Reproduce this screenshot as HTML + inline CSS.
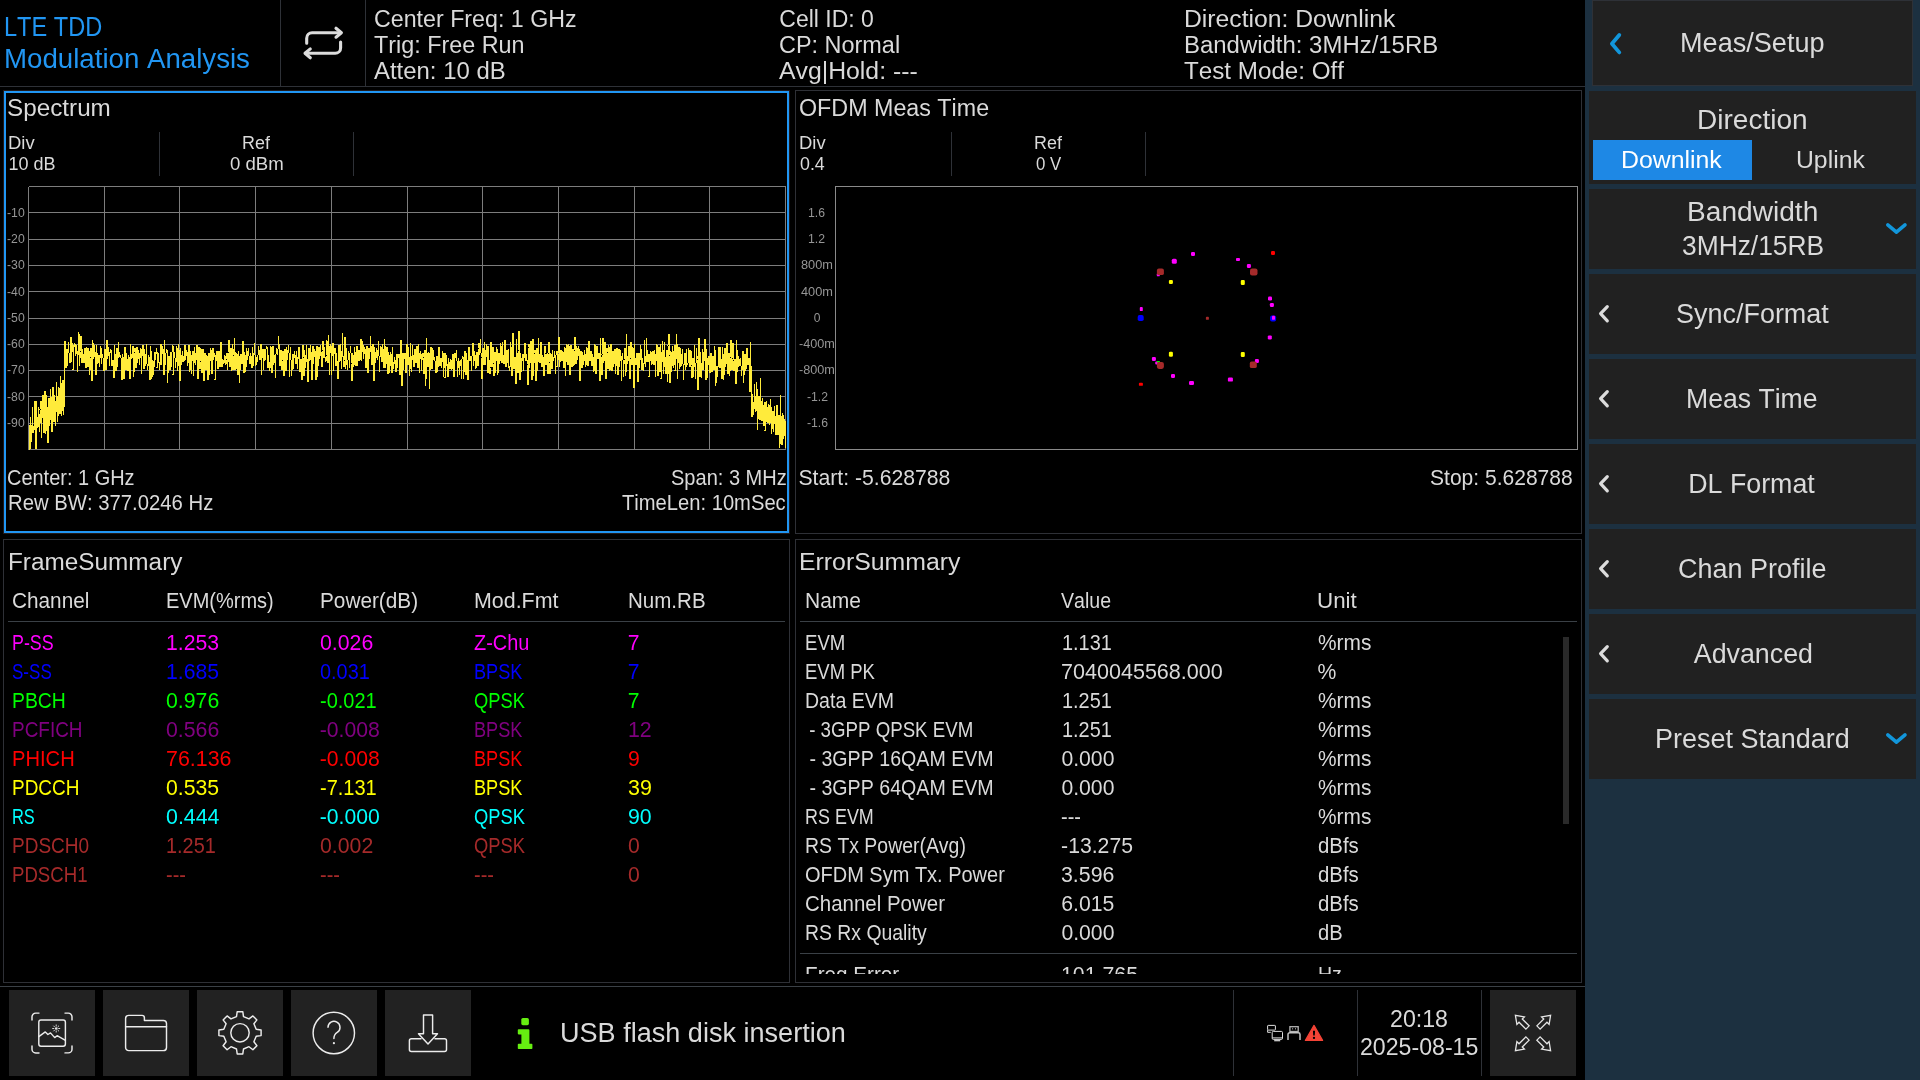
<!DOCTYPE html><html lang="en"><head><meta charset="utf-8"><title>LTE TDD Modulation Analysis</title><style>
*{box-sizing:border-box;margin:0;padding:0}
html,body{width:1920px;height:1080px;overflow:hidden;background:#000}
#app{position:absolute;left:0;top:0;width:1920px;height:1080px;will-change:transform}
body{position:relative;font-family:"Liberation Sans",sans-serif;color:#dadada}
.t{position:absolute;white-space:pre;line-height:1;font-kerning:none;transform-origin:0 50%}
.abs,section,header,footer,aside,nav,button,svg{position:absolute}
section.panel{border:1px solid #2e3036;background:#000}
section.panel.sel{border:1px solid #221b1b;box-shadow:inset 0 0 0 2px #2196f3}
.vsep{position:absolute;width:1px;background:#2e3137}
.hsep{position:absolute;height:1px;background:#3a4046}
button{border:0;background:#222;display:block}
button svg{left:0;top:0}
aside{left:1585px;top:0;width:335px;height:1080px;background:#1c3040}
aside .item{position:absolute;left:4px;width:327px;height:80px;background:#212121}
svg{overflow:visible}
</style></head><body><main id="app">
<header style="left:0;top:0;width:1585px;height:87px">
<div class="hsep" style="left:0;top:86px;width:1585px;background:#2e3137"></div>
<div class="vsep" style="left:280px;top:0;height:86px"></div><div class="vsep" style="left:365px;top:0;height:86px"></div>
<svg style="left:300px;top:22px" width="48" height="42" viewBox="300 22 48 42"><g fill="none" stroke="#dcdcdc" stroke-width="3.1" stroke-linecap="round" stroke-linejoin="round"><path d="M306.7 43.3V38.2a5.4 5.4 0 0 1 5.4-5.4H340.5"/><path d="M336 28.2L341.4 32.8L336 37.2"/><path d="M340.6 42V47.9a5.4 5.4 0 0 1-5.4 5.4H306"/><path d="M310.3 48.9L305 53.3L310.3 57.8"/></g></svg>
<span class="t" style="left:4.1px;top:12px;font-size:26.8px;line-height:30px;transform:scaleX(0.880);color:#2196f3">LTE TDD</span>
<span class="t" style="left:3.6px;top:44px;font-size:26.8px;line-height:30px;transform:scaleX(1.032);color:#2196f3">Modulation Analysis</span>
<span class="t" style="left:374.3px;top:6px;font-size:23px;line-height:26px;transform:scaleX(1.010)">Center Freq: 1 GHz</span>
<span class="t" style="left:373.7px;top:32px;font-size:23px;line-height:26px;transform:scaleX(1.015)">Trig: Free Run</span>
<span class="t" style="left:374.0px;top:58px;font-size:23px;line-height:26px;transform:scaleX(1.040)">Atten: 10 dB</span>
<span class="t" style="left:779.3px;top:6px;font-size:23px;line-height:26px">Cell ID: 0</span>
<span class="t" style="left:779.3px;top:32px;font-size:23px;line-height:26px;transform:scaleX(1.019)">CP: Normal</span>
<span class="t" style="left:779.0px;top:58px;font-size:23px;line-height:26px;transform:scaleX(1.078)">Avg|Hold: ---</span>
<span class="t" style="left:1184.3px;top:6px;font-size:23px;line-height:26px;transform:scaleX(1.074)">Direction: Downlink</span>
<span class="t" style="left:1184.4px;top:32px;font-size:23px;line-height:26px;transform:scaleX(1.041)">Bandwidth: 3MHz/15RB</span>
<span class="t" style="left:1183.7px;top:58px;font-size:23px;line-height:26px;transform:scaleX(1.052)">Test Mode: Off</span>
</header>
<section class="panel sel" style="left:3px;top:90px;width:787px;height:444px">
<div class="vsep" style="left:155px;top:41px;height:44px"></div><div class="vsep" style="left:349px;top:41px;height:44px"></div>
<svg style="left:24px;top:95px" width="760" height="265" viewBox="-0.5 -0.5 760 265"><g stroke="#7d7d7d" stroke-width="1" shape-rendering="crispEdges"><line x1="0" y1="0" x2="0" y2="263"/><line x1="76" y1="0" x2="76" y2="263"/><line x1="151" y1="0" x2="151" y2="263"/><line x1="227" y1="0" x2="227" y2="263"/><line x1="303" y1="0" x2="303" y2="263"/><line x1="379" y1="0" x2="379" y2="263"/><line x1="454" y1="0" x2="454" y2="263"/><line x1="530" y1="0" x2="530" y2="263"/><line x1="606" y1="0" x2="606" y2="263"/><line x1="681" y1="0" x2="681" y2="263"/><line x1="757" y1="0" x2="757" y2="263"/><line x1="0" y1="0" x2="757" y2="0"/><line x1="0" y1="26" x2="757" y2="26"/><line x1="0" y1="53" x2="757" y2="53"/><line x1="0" y1="79" x2="757" y2="79"/><line x1="0" y1="105" x2="757" y2="105"/><line x1="0" y1="132" x2="757" y2="132"/><line x1="0" y1="158" x2="757" y2="158"/><line x1="0" y1="184" x2="757" y2="184"/><line x1="0" y1="210" x2="757" y2="210"/><line x1="0" y1="237" x2="757" y2="237"/><line x1="0" y1="263" x2="757" y2="263"/></g><polyline fill="none" stroke="#ffeb3b" stroke-width="1" stroke-linejoin="bevel" shape-rendering="crispEdges" points="0.5,238.4 0.5,262.5 1.5,262.5 1.5,230.5 2.5,239.0 2.5,255.6 3.5,246.0 3.5,220.1 4.5,239.3 4.5,246.8 5.5,243.3 5.5,219.6 6.5,214.1 6.5,253.4 7.5,262.0 7.5,214.9 8.5,230.1 8.5,241.9 9.5,240.0 9.5,220.6 10.5,227.3 10.5,245.0 11.5,236.8 11.5,223.1 12.5,215.0 12.5,251.8 13.5,231.3 13.5,208.9 14.5,208.8 14.5,240.6 15.5,246.4 15.5,216.4 16.5,204.8 16.5,247.2 17.5,244.4 17.5,208.1 18.5,220.5 18.5,234.5 19.5,256.5 19.5,222.5 20.5,211.8 20.5,239.6 21.5,233.5 21.5,202.2 22.5,210.6 22.5,226.5 23.5,245.2 23.5,212.6 24.5,200.4 24.5,223.0 25.5,235.0 25.5,208.0 26.5,214.6 26.5,239.2 27.5,225.9 27.5,195.9 28.5,209.0 28.5,235.4 29.5,229.9 29.5,201.2 30.5,201.8 30.5,223.8 31.5,227.8 31.5,189.4 32.5,196.6 32.5,229.4 33.5,224.8 33.5,198.7 34.5,193.9 34.5,228.1 35.5,220.6 35.5,183.6 36.5,154.6 36.5,172.8 37.5,181.9 37.5,165.2 38.5,162.7 38.5,179.3 39.5,166.4 39.5,155.8 40.5,166.2 40.5,174.2 41.5,176.6 41.5,162.8 42.5,150.8 42.5,175.5 43.5,165.2 43.5,156.9 44.5,158.7 44.5,183.1 45.5,160.8 45.5,159.2 46.5,157.0 46.5,169.9 47.5,167.2 47.5,158.9 48.5,164.9 48.5,185.6 49.5,168.9 49.5,145.8 50.5,147.3 50.5,179.3 51.5,171.9 51.5,165.3 52.5,149.6 52.5,170.7 53.5,176.0 53.5,162.9 54.5,167.5 54.5,176.1 55.5,176.5 55.5,165.7 56.5,161.7 56.5,173.5 57.5,181.2 57.5,174.5 58.5,161.0 58.5,172.6 59.5,180.6 59.5,161.4 60.5,164.3 60.5,188.9 61.5,183.1 61.5,171.1 62.5,161.9 62.5,183.6 63.5,194.8 63.5,153.7 64.5,156.3 64.5,172.4 65.5,170.6 65.5,158.8 66.5,165.9 66.5,170.7 67.5,188.4 67.5,158.5 68.5,166.3 68.5,176.1 69.5,176.9 69.5,173.6 70.5,168.3 70.5,180.3 71.5,171.9 71.5,159.4 72.5,161.3 72.5,177.2 73.5,171.9 73.5,167.8 74.5,171.7 74.5,178.1 75.5,184.7 75.5,164.5 76.5,162.9 76.5,179.7 77.5,183.5 77.5,170.6 78.5,153.7 78.5,172.8 79.5,169.4 79.5,160.8 80.5,165.5 80.5,179.5 81.5,166.3 81.5,163.4 82.5,163.3 82.5,171.4 83.5,179.8 83.5,174.2 84.5,174.0 84.5,177.2 85.5,191.9 85.5,158.2 86.5,167.3 86.5,178.2 87.5,184.6 87.5,165.5 88.5,161.3 88.5,180.5 89.5,171.4 89.5,155.9 90.5,165.3 90.5,168.8 91.5,170.1 91.5,168.6 92.5,171.5 92.5,181.0 93.5,193.3 93.5,167.6 94.5,170.3 94.5,184.0 95.5,192.8 95.5,168.7 96.5,160.1 96.5,169.1 97.5,183.0 97.5,167.0 98.5,172.3 98.5,174.6 99.5,184.1 99.5,169.0 100.5,170.9 100.5,185.3 101.5,192.0 101.5,157.7 102.5,167.3 102.5,172.4 103.5,171.2 103.5,168.9 104.5,159.8 104.5,190.3 105.5,185.8 105.5,166.0 106.5,161.1 106.5,170.6 107.5,181.9 107.5,169.7 108.5,160.5 108.5,176.4 109.5,172.0 109.5,163.2 110.5,166.1 110.5,178.4 111.5,171.3 111.5,162.3 112.5,162.7 112.5,187.9 113.5,169.9 113.5,160.3 114.5,158.6 114.5,167.3 115.5,182.0 115.5,162.4 116.5,167.2 116.5,179.9 117.5,173.5 117.5,157.5 118.5,177.3 118.5,183.9 119.5,179.7 119.5,168.5 120.5,170.6 120.5,187.0 121.5,193.1 121.5,159.3 122.5,164.7 122.5,192.2 123.5,190.1 123.5,173.4 124.5,174.7 124.5,188.6 125.5,180.5 125.5,168.7 126.5,165.4 126.5,173.7 127.5,167.2 127.5,161.6 128.5,165.6 128.5,181.1 129.5,175.6 129.5,166.1 130.5,176.0 130.5,183.3 131.5,178.8 131.5,162.7 132.5,157.3 132.5,178.8 133.5,167.8 133.5,159.1 134.5,162.1 134.5,172.3 135.5,188.9 135.5,153.7 136.5,167.9 136.5,178.4 137.5,166.8 137.5,164.0 138.5,163.1 138.5,196.1 139.5,186.5 139.5,169.9 140.5,169.7 140.5,179.9 141.5,183.3 141.5,166.4 142.5,165.4 142.5,180.5 143.5,165.8 143.5,159.4 144.5,159.1 144.5,188.2 145.5,171.7 145.5,165.0 146.5,171.1 146.5,181.3 147.5,175.1 147.5,159.7 148.5,161.9 148.5,184.3 149.5,179.2 149.5,158.0 150.5,163.2 150.5,190.6 151.5,194.5 151.5,161.5 152.5,168.2 152.5,178.1 153.5,175.6 153.5,164.5 154.5,169.9 154.5,175.6 155.5,174.5 155.5,169.6 156.5,158.7 156.5,173.1 157.5,169.5 157.5,164.0 158.5,165.2 158.5,179.2 159.5,176.9 159.5,161.8 160.5,158.7 160.5,185.3 161.5,183.1 161.5,164.5 162.5,168.5 162.5,187.3 163.5,174.9 163.5,165.5 164.5,164.7 164.5,189.3 165.5,176.9 165.5,161.0 166.5,166.3 166.5,178.4 167.5,173.0 167.5,166.2 168.5,158.1 168.5,177.5 169.5,192.0 169.5,166.3 170.5,160.7 170.5,174.2 171.5,182.9 171.5,175.2 172.5,162.0 172.5,178.0 173.5,186.6 173.5,168.2 174.5,162.8 174.5,172.6 175.5,194.0 175.5,174.9 176.5,166.8 176.5,171.6 177.5,183.2 177.5,169.1 178.5,169.2 178.5,188.0 179.5,193.6 179.5,175.8 180.5,166.4 180.5,188.1 181.5,174.2 181.5,162.2 182.5,163.2 182.5,185.8 183.5,187.0 183.5,165.5 184.5,161.7 184.5,173.6 185.5,170.4 185.5,166.9 186.5,168.7 186.5,193.3 187.5,174.0 187.5,169.3 188.5,164.7 188.5,176.4 189.5,182.9 189.5,166.4 190.5,164.7 190.5,174.4 191.5,180.9 191.5,160.2 192.5,155.5 192.5,166.5 193.5,180.1 193.5,172.7 194.5,173.0 194.5,176.6 195.5,176.8 195.5,169.4 196.5,169.3 196.5,178.8 197.5,177.1 197.5,173.0 198.5,166.6 198.5,183.9 199.5,175.8 199.5,166.0 200.5,153.5 200.5,164.1 201.5,180.5 201.5,171.6 202.5,161.1 202.5,184.9 203.5,183.1 203.5,158.0 204.5,162.3 204.5,168.8 205.5,183.9 205.5,151.5 206.5,165.1 206.5,182.5 207.5,182.8 207.5,171.9 208.5,167.0 208.5,185.1 209.5,188.9 209.5,164.2 210.5,169.4 210.5,196.3 211.5,183.8 211.5,178.9 212.5,167.9 212.5,173.5 213.5,177.8 213.5,158.7 214.5,154.9 214.5,179.3 215.5,186.6 215.5,165.5 216.5,168.1 216.5,185.6 217.5,180.7 217.5,161.2 218.5,165.0 218.5,173.6 219.5,164.2 219.5,161.2 220.5,169.1 220.5,170.2 221.5,177.5 221.5,166.5 222.5,169.1 222.5,169.5 223.5,181.1 223.5,160.7 224.5,166.1 224.5,179.3 225.5,167.6 225.5,156.2 226.5,168.5 226.5,179.8 227.5,178.1 227.5,170.2 228.5,171.6 228.5,175.0 229.5,168.2 229.5,159.4 230.5,163.9 230.5,166.2 231.5,173.4 231.5,165.3 232.5,157.3 232.5,188.9 233.5,171.5 233.5,163.9 234.5,162.3 234.5,183.6 235.5,174.5 235.5,166.4 236.5,163.0 236.5,173.1 237.5,162.4 237.5,159.9 238.5,160.5 238.5,164.6 239.5,181.0 239.5,168.1 240.5,175.8 240.5,184.0 241.5,181.9 241.5,160.3 242.5,160.5 242.5,185.1 243.5,186.1 243.5,163.1 244.5,159.6 244.5,178.0 245.5,176.4 245.5,168.4 246.5,170.7 246.5,191.6 247.5,167.8 247.5,161.4 248.5,165.2 248.5,168.8 249.5,162.6 249.5,149.9 250.5,157.7 250.5,169.0 251.5,179.5 251.5,165.2 252.5,163.2 252.5,181.9 253.5,183.5 253.5,174.0 254.5,164.9 254.5,169.3 255.5,189.5 255.5,167.9 256.5,162.4 256.5,175.0 257.5,184.6 257.5,160.6 258.5,165.6 258.5,173.9 259.5,163.8 259.5,158.6 260.5,166.4 260.5,190.8 261.5,168.4 261.5,160.4 262.5,173.4 262.5,189.5 263.5,183.9 263.5,168.8 264.5,167.5 264.5,182.7 265.5,171.6 265.5,164.8 266.5,168.1 266.5,172.8 267.5,177.2 267.5,164.1 268.5,170.2 268.5,182.8 269.5,172.8 269.5,169.2 270.5,160.4 270.5,181.7 271.5,185.4 271.5,174.4 272.5,172.8 272.5,182.5 273.5,193.4 273.5,166.8 274.5,158.9 274.5,170.8 275.5,189.3 275.5,163.5 276.5,168.8 276.5,181.6 277.5,175.6 277.5,158.0 278.5,172.9 278.5,184.4 279.5,195.6 279.5,176.9 280.5,161.7 280.5,174.7 281.5,173.2 281.5,158.4 282.5,165.8 282.5,178.4 283.5,193.1 283.5,167.5 284.5,159.1 284.5,177.2 285.5,170.6 285.5,162.9 286.5,164.6 286.5,175.5 287.5,193.6 287.5,172.6 288.5,159.5 288.5,190.4 289.5,179.8 289.5,164.9 290.5,160.8 290.5,172.6 291.5,169.2 291.5,158.3 292.5,165.0 292.5,179.4 293.5,180.4 293.5,164.0 294.5,154.2 294.5,164.9 295.5,171.6 295.5,160.4 296.5,170.2 296.5,174.2 297.5,174.7 297.5,169.4 298.5,154.0 298.5,175.2 299.5,176.6 299.5,148.0 300.5,159.1 300.5,188.2 301.5,166.7 301.5,157.4 302.5,159.3 302.5,188.8 303.5,169.4 303.5,158.6 304.5,156.5 304.5,184.0 305.5,167.6 305.5,164.7 306.5,161.6 306.5,171.2 307.5,179.7 307.5,166.2 308.5,174.4 308.5,177.6 309.5,192.1 309.5,165.3 310.5,158.8 310.5,174.3 311.5,174.8 311.5,157.0 312.5,166.9 312.5,182.2 313.5,164.2 313.5,146.1 314.5,170.0 314.5,175.1 315.5,180.7 315.5,174.0 316.5,150.3 316.5,182.2 317.5,174.4 317.5,161.1 318.5,178.8 318.5,183.0 319.5,173.6 319.5,165.0 320.5,166.1 320.5,181.6 321.5,166.6 321.5,159.1 322.5,166.7 322.5,176.9 323.5,194.2 323.5,166.9 324.5,168.3 324.5,180.1 325.5,178.9 325.5,160.1 326.5,165.2 326.5,176.3 327.5,179.4 327.5,168.8 328.5,159.7 328.5,179.7 329.5,174.5 329.5,166.4 330.5,163.2 330.5,173.6 331.5,173.7 331.5,170.8 332.5,153.0 332.5,174.5 333.5,165.8 333.5,155.0 334.5,158.2 334.5,172.1 335.5,167.6 335.5,160.4 336.5,162.0 336.5,170.7 337.5,181.4 337.5,166.5 338.5,159.4 338.5,180.6 339.5,186.1 339.5,175.6 340.5,161.2 340.5,172.3 341.5,165.5 341.5,149.4 342.5,159.5 342.5,174.3 343.5,178.5 343.5,161.8 344.5,158.0 344.5,166.0 345.5,194.6 345.5,160.6 346.5,165.5 346.5,176.8 347.5,171.5 347.5,161.4 348.5,163.1 348.5,173.5 349.5,168.9 349.5,154.0 350.5,169.3 350.5,185.3 351.5,170.3 351.5,159.7 352.5,160.3 352.5,172.3 353.5,175.8 353.5,157.9 354.5,162.4 354.5,177.3 355.5,181.3 355.5,152.7 356.5,159.3 356.5,181.2 357.5,177.9 357.5,167.9 358.5,160.8 358.5,173.7 359.5,187.2 359.5,166.1 360.5,168.0 360.5,186.7 361.5,179.4 361.5,165.3 362.5,167.1 362.5,177.4 363.5,186.9 363.5,160.2 364.5,175.7 364.5,182.8 365.5,177.9 365.5,171.0 366.5,173.7 366.5,185.2 367.5,185.5 367.5,176.5 368.5,167.1 368.5,181.7 369.5,171.6 369.5,168.8 370.5,167.2 370.5,175.3 371.5,188.0 371.5,159.2 372.5,153.4 372.5,185.2 373.5,199.0 373.5,171.9 374.5,166.6 374.5,183.7 375.5,172.8 375.5,166.6 376.5,166.8 376.5,180.5 377.5,186.2 377.5,165.3 378.5,157.2 378.5,174.7 379.5,178.7 379.5,160.8 380.5,170.3 380.5,189.2 381.5,182.7 381.5,156.8 382.5,169.8 382.5,185.2 383.5,173.8 383.5,158.9 384.5,169.0 384.5,177.5 385.5,180.1 385.5,164.4 386.5,162.5 386.5,170.7 387.5,176.4 387.5,166.6 388.5,159.5 388.5,164.1 389.5,181.1 389.5,157.4 390.5,166.3 390.5,186.0 391.5,172.3 391.5,164.2 392.5,167.5 392.5,184.3 393.5,173.1 393.5,167.5 394.5,166.6 394.5,170.9 395.5,187.4 395.5,166.9 396.5,163.8 396.5,199.9 397.5,192.8 397.5,151.3 398.5,166.2 398.5,176.6 399.5,180.8 399.5,167.3 400.5,166.2 400.5,202.9 401.5,183.5 401.5,163.0 402.5,160.7 402.5,180.7 403.5,182.8 403.5,161.4 404.5,163.2 404.5,168.7 405.5,173.9 405.5,170.7 406.5,174.1 406.5,181.2 407.5,186.3 407.5,172.1 408.5,169.2 408.5,185.9 409.5,180.9 409.5,168.6 410.5,160.6 410.5,174.8 411.5,179.7 411.5,173.9 412.5,171.8 412.5,181.0 413.5,175.0 413.5,165.0 414.5,166.2 414.5,190.4 415.5,181.1 415.5,175.9 416.5,166.3 416.5,191.1 417.5,179.5 417.5,168.0 418.5,177.3 418.5,186.3 419.5,190.8 419.5,171.4 420.5,175.4 420.5,179.7 421.5,182.4 421.5,172.7 422.5,173.1 422.5,183.0 423.5,182.4 423.5,177.2 424.5,167.4 424.5,172.6 425.5,190.7 425.5,168.9 426.5,166.8 426.5,171.6 427.5,170.6 427.5,163.3 428.5,174.4 428.5,190.7 429.5,181.6 429.5,171.1 430.5,174.7 430.5,188.2 431.5,179.4 431.5,174.2 432.5,173.9 432.5,192.0 433.5,172.5 433.5,171.0 434.5,170.2 434.5,192.4 435.5,185.5 435.5,183.8 436.5,164.7 436.5,182.4 437.5,188.3 437.5,166.6 438.5,173.6 438.5,180.8 439.5,193.1 439.5,170.9 440.5,160.3 440.5,173.2 441.5,174.4 441.5,170.3 442.5,170.5 442.5,184.0 443.5,169.5 443.5,159.9 444.5,156.9 444.5,179.3 445.5,174.0 445.5,164.5 446.5,168.6 446.5,180.7 447.5,181.9 447.5,168.9 448.5,165.1 448.5,176.1 449.5,179.1 449.5,162.0 450.5,156.9 450.5,168.6 451.5,163.3 451.5,152.8 452.5,166.2 452.5,170.9 453.5,192.2 453.5,167.4 454.5,161.8 454.5,177.6 455.5,178.4 455.5,155.8 456.5,163.0 456.5,178.3 457.5,170.0 457.5,157.5 458.5,159.1 458.5,168.1 459.5,186.1 459.5,159.6 460.5,173.2 460.5,179.2 461.5,187.8 461.5,181.4 462.5,155.2 462.5,161.2 463.5,180.3 463.5,171.8 464.5,160.6 464.5,176.9 465.5,189.8 465.5,169.6 466.5,165.4 466.5,186.5 467.5,174.6 467.5,160.9 468.5,162.2 468.5,188.7 469.5,186.6 469.5,167.7 470.5,166.2 470.5,177.3 471.5,174.9 471.5,156.5 472.5,159.9 472.5,169.0 473.5,176.3 473.5,155.1 474.5,168.5 474.5,177.3 475.5,177.0 475.5,161.9 476.5,153.4 476.5,179.9 477.5,180.5 477.5,168.9 478.5,163.8 478.5,167.2 479.5,176.6 479.5,162.5 480.5,181.2 480.5,184.6 481.5,180.1 481.5,155.1 482.5,160.7 482.5,183.8 483.5,189.2 483.5,158.4 484.5,146.4 484.5,174.3 485.5,182.9 485.5,173.8 486.5,170.6 486.5,184.7 487.5,197.5 487.5,152.9 488.5,166.6 488.5,178.2 489.5,186.0 489.5,164.0 490.5,145.0 490.5,180.5 491.5,193.3 491.5,166.2 492.5,171.0 492.5,185.4 493.5,174.8 493.5,168.1 494.5,167.3 494.5,184.4 495.5,171.8 495.5,166.6 496.5,156.9 496.5,170.1 497.5,174.2 497.5,167.4 498.5,173.3 498.5,177.9 499.5,198.2 499.5,161.0 500.5,157.2 500.5,181.8 501.5,176.4 501.5,162.5 502.5,154.4 502.5,173.7 503.5,193.6 503.5,170.4 504.5,152.8 504.5,189.9 505.5,176.0 505.5,167.0 506.5,163.4 506.5,178.6 507.5,194.0 507.5,180.8 508.5,161.9 508.5,184.4 509.5,175.4 509.5,151.6 510.5,167.4 510.5,171.5 511.5,176.4 511.5,170.3 512.5,155.3 512.5,180.6 513.5,180.2 513.5,168.9 514.5,170.8 514.5,185.8 515.5,189.4 515.5,179.5 516.5,159.7 516.5,166.9 517.5,178.7 517.5,167.9 518.5,167.8 518.5,174.2 519.5,187.5 519.5,167.1 520.5,155.2 520.5,175.9 521.5,187.5 521.5,178.4 522.5,167.0 522.5,170.5 523.5,182.6 523.5,163.3 524.5,170.0 524.5,174.7 525.5,171.3 525.5,164.0 526.5,170.9 526.5,187.7 527.5,168.7 527.5,167.7 528.5,164.8 528.5,180.1 529.5,173.0 529.5,167.4 530.5,150.9 530.5,180.8 531.5,175.5 531.5,171.4 532.5,163.2 532.5,165.0 533.5,174.0 533.5,165.0 534.5,165.8 534.5,173.7 535.5,181.3 535.5,164.2 536.5,161.0 536.5,189.1 537.5,175.2 537.5,163.5 538.5,158.0 538.5,177.6 539.5,178.5 539.5,157.6 540.5,159.2 540.5,174.0 541.5,188.4 541.5,167.5 542.5,158.4 542.5,174.3 543.5,180.4 543.5,167.3 544.5,162.3 544.5,179.3 545.5,178.0 545.5,164.2 546.5,150.9 546.5,168.7 547.5,177.7 547.5,159.5 548.5,161.5 548.5,173.2 549.5,169.8 549.5,159.8 550.5,162.8 550.5,172.6 551.5,194.4 551.5,166.2 552.5,164.3 552.5,167.5 553.5,181.0 553.5,165.1 554.5,168.7 554.5,178.8 555.5,174.1 555.5,163.7 556.5,167.9 556.5,180.7 557.5,178.9 557.5,161.8 558.5,161.3 558.5,174.2 559.5,179.1 559.5,174.8 560.5,155.0 560.5,170.1 561.5,174.3 561.5,167.7 562.5,164.7 562.5,175.7 563.5,179.7 563.5,167.8 564.5,170.5 564.5,182.9 565.5,184.9 565.5,158.1 566.5,158.3 566.5,169.5 567.5,187.0 567.5,163.5 568.5,159.7 568.5,168.5 569.5,172.7 569.5,166.8 570.5,166.9 570.5,177.7 571.5,194.2 571.5,151.7 572.5,170.1 572.5,182.6 573.5,188.8 573.5,168.2 574.5,152.0 574.5,176.2 575.5,174.5 575.5,156.3 576.5,155.9 576.5,166.9 577.5,192.7 577.5,167.1 578.5,161.8 578.5,165.9 579.5,182.6 579.5,158.9 580.5,160.8 580.5,180.4 581.5,183.9 581.5,164.7 582.5,157.4 582.5,172.5 583.5,184.4 583.5,181.5 584.5,164.9 584.5,180.6 585.5,177.0 585.5,165.8 586.5,162.7 586.5,187.4 587.5,179.2 587.5,164.2 588.5,161.8 588.5,173.2 589.5,188.2 589.5,172.6 590.5,162.4 590.5,180.9 591.5,174.0 591.5,163.5 592.5,169.4 592.5,194.8 593.5,171.5 593.5,166.3 594.5,173.0 594.5,190.7 595.5,177.2 595.5,173.0 596.5,161.4 596.5,189.7 597.5,185.7 597.5,147.1 598.5,169.5 598.5,177.9 599.5,174.6 599.5,167.4 600.5,159.8 600.5,162.3 601.5,192.7 601.5,172.0 602.5,155.6 602.5,173.9 603.5,178.3 603.5,163.6 604.5,161.0 604.5,188.6 605.5,201.7 605.5,157.3 606.5,171.6 606.5,176.4 607.5,178.7 607.5,170.3 608.5,166.5 608.5,181.7 609.5,195.6 609.5,171.0 610.5,166.8 610.5,181.3 611.5,173.0 611.5,159.0 612.5,162.3 612.5,178.2 613.5,183.8 613.5,171.4 614.5,176.7 614.5,184.9 615.5,177.9 615.5,153.6 616.5,170.0 616.5,180.2 617.5,175.8 617.5,151.7 618.5,163.3 618.5,168.4 619.5,175.0 619.5,168.2 620.5,167.3 620.5,190.2 621.5,174.5 621.5,165.4 622.5,165.5 622.5,177.8 623.5,177.5 623.5,173.2 624.5,164.4 624.5,168.8 625.5,178.0 625.5,163.5 626.5,167.8 626.5,190.6 627.5,174.2 627.5,158.0 628.5,158.6 628.5,179.7 629.5,189.8 629.5,165.7 630.5,160.4 630.5,178.5 631.5,185.5 631.5,157.6 632.5,165.1 632.5,192.1 633.5,175.7 633.5,154.4 634.5,163.5 634.5,187.3 635.5,180.1 635.5,155.9 636.5,170.5 636.5,180.5 637.5,187.5 637.5,167.3 638.5,163.5 638.5,195.5 639.5,187.6 639.5,159.2 640.5,147.3 640.5,168.6 641.5,196.2 641.5,165.5 642.5,165.2 642.5,185.5 643.5,179.1 643.5,159.2 644.5,164.0 644.5,181.5 645.5,178.6 645.5,170.3 646.5,158.6 646.5,184.1 647.5,172.1 647.5,147.5 648.5,157.5 648.5,192.5 649.5,176.0 649.5,173.7 650.5,160.6 650.5,182.3 651.5,180.2 651.5,161.7 652.5,167.2 652.5,179.2 653.5,168.4 653.5,162.2 654.5,177.3 654.5,193.2 655.5,178.5 655.5,169.7 656.5,166.9 656.5,183.3 657.5,180.5 657.5,162.8 658.5,176.9 658.5,178.4 659.5,176.9 659.5,162.1 660.5,163.7 660.5,170.9 661.5,180.1 661.5,164.4 662.5,164.0 662.5,178.9 663.5,191.4 663.5,172.8 664.5,171.5 664.5,190.9 665.5,180.6 665.5,158.2 666.5,177.4 666.5,192.9 667.5,176.7 667.5,161.5 668.5,169.2 668.5,172.8 669.5,203.8 669.5,169.5 670.5,151.2 670.5,189.1 671.5,190.0 671.5,165.4 672.5,176.7 672.5,191.3 673.5,183.7 673.5,162.4 674.5,165.8 674.5,183.7 675.5,174.8 675.5,169.9 676.5,152.3 676.5,185.3 677.5,193.1 677.5,162.8 678.5,171.7 678.5,191.4 679.5,178.8 679.5,171.6 680.5,169.2 680.5,179.6 681.5,186.7 681.5,172.2 682.5,166.4 682.5,181.5 683.5,185.4 683.5,173.6 684.5,169.8 684.5,177.4 685.5,183.1 685.5,159.8 686.5,163.2 686.5,199.0 687.5,196.5 687.5,188.4 688.5,179.8 688.5,190.9 689.5,180.5 689.5,165.0 690.5,160.5 690.5,168.6 691.5,181.4 691.5,160.7 692.5,172.7 692.5,179.2 693.5,192.1 693.5,160.3 694.5,167.0 694.5,193.7 695.5,188.2 695.5,172.7 696.5,161.9 696.5,180.2 697.5,177.9 697.5,172.7 698.5,156.1 698.5,186.4 699.5,187.7 699.5,171.2 700.5,166.3 700.5,189.5 701.5,184.1 701.5,171.3 702.5,153.8 702.5,166.5 703.5,183.7 703.5,172.0 704.5,156.3 704.5,173.9 705.5,184.7 705.5,174.3 706.5,172.8 706.5,189.8 707.5,197.2 707.5,153.9 708.5,163.1 708.5,185.3 709.5,180.4 709.5,169.9 710.5,172.5 710.5,176.6 711.5,179.6 711.5,171.2 712.5,179.4 712.5,189.8 713.5,183.8 713.5,168.2 714.5,164.5 714.5,196.5 715.5,188.2 715.5,169.2 716.5,167.3 716.5,184.3 717.5,182.5 717.5,166.8 718.5,161.9 718.5,168.9 719.5,178.4 719.5,173.2 720.5,171.9 720.5,187.7 721.5,205.0 721.5,155.5 722.5,179.8 722.5,201.1 723.5,230.2 723.5,207.2 724.5,215.8 724.5,228.3 725.5,222.5 725.5,197.9 726.5,209.3 726.5,225.6 727.5,224.7 727.5,195.0 728.5,202.9 728.5,243.7 729.5,232.2 729.5,225.8 730.5,209.2 730.5,225.7 731.5,233.6 731.5,191.7 732.5,214.4 732.5,225.1 733.5,234.0 733.5,211.5 734.5,218.7 734.5,238.6 735.5,239.6 735.5,221.3 736.5,215.2 736.5,244.1 737.5,235.8 737.5,214.7 738.5,220.2 738.5,233.3 739.5,236.8 739.5,217.7 740.5,218.7 740.5,238.6 741.5,236.3 741.5,212.8 742.5,220.7 742.5,247.5 743.5,242.2 743.5,225.4 744.5,224.2 744.5,245.5 745.5,237.2 745.5,219.5 746.5,229.3 746.5,243.6 747.5,248.4 747.5,235.6 748.5,218.2 748.5,241.1 749.5,248.5 749.5,233.3 750.5,228.5 750.5,261.6 751.5,257.1 751.5,208.7 752.5,229.7 752.5,244.4 753.5,258.2 753.5,227.1 754.5,228.8 754.5,252.7 755.5,249.0 755.5,233.2 756.5,234.0 756.5,261.2"/></svg>
<span class="t" style="left:2.7px;top:4px;font-size:23px;line-height:26px;transform:scaleX(1.055)">Spectrum</span>
<span class="t" style="left:3.8px;top:42px;font-size:18px;line-height:20px;transform:scaleX(1.024)">Div</span>
<span class="t" style="left:4.5px;top:63px;font-size:18px;line-height:20px">10 dB</span>
<span class="t" style="left:237.8px;top:42px;font-size:18px;line-height:20px;transform:scaleX(0.995)">Ref</span>
<span class="t" style="left:225.8px;top:63px;font-size:18px;line-height:20px;transform:scaleX(1.034)">0 dBm</span>
<span class="t" style="left:3.1px;top:115px;font-size:12px;line-height:14px;transform:scaleX(1.020);color:#969696">-10</span>
<span class="t" style="left:3.1px;top:141px;font-size:12px;line-height:14px;transform:scaleX(1.020);color:#969696">-20</span>
<span class="t" style="left:3.1px;top:167px;font-size:12px;line-height:14px;transform:scaleX(1.020);color:#969696">-30</span>
<span class="t" style="left:3.1px;top:194px;font-size:12px;line-height:14px;transform:scaleX(1.020);color:#969696">-40</span>
<span class="t" style="left:3.1px;top:220px;font-size:12px;line-height:14px;transform:scaleX(1.020);color:#969696">-50</span>
<span class="t" style="left:3.1px;top:246px;font-size:12px;line-height:14px;transform:scaleX(1.020);color:#969696">-60</span>
<span class="t" style="left:3.1px;top:272px;font-size:12px;line-height:14px;transform:scaleX(1.020);color:#969696">-70</span>
<span class="t" style="left:3.1px;top:299px;font-size:12px;line-height:14px;transform:scaleX(1.020);color:#969696">-80</span>
<span class="t" style="left:3.1px;top:325px;font-size:12px;line-height:14px;transform:scaleX(1.020);color:#969696">-90</span>
<span class="t" style="left:3.3px;top:375px;font-size:21.2px;line-height:23px;transform:scaleX(0.942)">Center: 1 GHz</span>
<span class="t" style="left:3.5px;top:400px;font-size:21.2px;line-height:23px;transform:scaleX(0.958)">Rew BW: 377.0246 Hz</span>
<span class="t" style="left:667.1px;top:375px;font-size:21.2px;line-height:23px;transform:scaleX(0.945)">Span: 3 MHz</span>
<span class="t" style="left:617.6px;top:400px;font-size:21.2px;line-height:23px;transform:scaleX(0.952)">TimeLen: 10mSec</span>
</section>
<section class="panel" style="left:795px;top:90px;width:787px;height:444px">
<div class="vsep" style="left:155px;top:41px;height:44px"></div><div class="vsep" style="left:349px;top:41px;height:44px"></div>
<svg style="left:39px;top:95px" width="744" height="265" viewBox="0 0 744 265"><rect x="0.5" y="0.5" width="742" height="263" fill="none" stroke="#8a8a8a" stroke-width="1"/><rect x="356.0" y="65.9" width="4" height="4" rx="1.2" fill="#ff00ff"/><rect x="336.8" y="72.8" width="5" height="5" rx="1.5" fill="#ff00ff"/><rect x="401.0" y="71.9" width="4" height="3" rx="0.9" fill="#ff00ff"/><rect x="411.9" y="77.9" width="4" height="4" rx="1.2" fill="#ff00ff"/><rect x="433.0" y="110.5" width="4" height="4" rx="1.2" fill="#ff00ff"/><rect x="434.9" y="117.0" width="4" height="4" rx="1.2" fill="#ff00ff"/><rect x="304.8" y="121.1" width="3" height="4" rx="0.9" fill="#ff00ff"/><rect x="432.8" y="149.4" width="4" height="4" rx="1.2" fill="#ff00ff"/><rect x="316.9" y="170.9" width="4" height="4" rx="1.2" fill="#ff00ff"/><rect x="419.9" y="172.9" width="4" height="4" rx="1.2" fill="#ff00ff"/><rect x="336.0" y="187.9" width="4" height="4" rx="1.2" fill="#ff00ff"/><rect x="354.0" y="195.0" width="5" height="4" rx="1.2" fill="#ff00ff"/><rect x="392.9" y="191.6" width="5" height="4" rx="1.2" fill="#ff00ff"/><rect x="321.8" y="87.3" width="3" height="3" rx="0.9" fill="#ff00ff"/><rect x="320.2" y="175.5" width="3" height="3" rx="0.9" fill="#ff00ff"/><rect x="321.8" y="174.9" width="3" height="1.5" rx="0.4" fill="#00ff00"/><rect x="321.9" y="82.6" width="7" height="6.5" rx="1.9" fill="#a52a2a"/><rect x="415.0" y="82.5" width="7.5" height="7" rx="2.1" fill="#a52a2a"/><rect x="321.9" y="175.9" width="7" height="7" rx="2.1" fill="#a52a2a"/><rect x="414.8" y="175.6" width="7" height="6.5" rx="1.9" fill="#a52a2a"/><rect x="370.9" y="130.8" width="3" height="3" rx="0.9" fill="#a52a2a"/><rect x="333.9" y="93.9" width="4" height="4" rx="1.2" fill="#ffff00"/><rect x="405.8" y="93.9" width="4" height="5" rx="1.2" fill="#ffff00"/><rect x="333.9" y="165.8" width="4" height="5" rx="1.2" fill="#ffff00"/><rect x="405.8" y="165.9" width="4" height="5" rx="1.2" fill="#ffff00"/><rect x="302.7" y="129.1" width="6" height="6" rx="1.8" fill="#0000ff"/><rect x="435.1" y="129.5" width="6" height="6" rx="1.8" fill="#0000ff"/><rect x="437.0" y="129.8" width="3" height="4" rx="0.9" fill="#ff00ff"/><rect x="436.0" y="65.0" width="4" height="4" rx="1.2" fill="#ff0000"/><rect x="303.9" y="196.8" width="4" height="3" rx="0.9" fill="#ff0000"/></svg>
<span class="t" style="left:3.0px;top:4px;font-size:23px;line-height:26px;transform:scaleX(1.012)">OFDM Meas Time</span>
<span class="t" style="left:3.3px;top:42px;font-size:18px;line-height:20px;transform:scaleX(1.024)">Div</span>
<span class="t" style="left:3.7px;top:63px;font-size:18px;line-height:20px;transform:scaleX(0.990)">0.4</span>
<span class="t" style="left:238.0px;top:42px;font-size:18px;line-height:20px;transform:scaleX(0.995)">Ref</span>
<span class="t" style="left:239.7px;top:63px;font-size:18px;line-height:20px;transform:scaleX(0.935)">0 V</span>
<span class="t" style="left:12.3px;top:115px;font-size:12px;line-height:14px;transform:scaleX(1.018);color:#969696">1.6</span>
<span class="t" style="left:12.3px;top:141px;font-size:12px;line-height:14px;transform:scaleX(1.021);color:#969696">1.2</span>
<span class="t" style="left:5.1px;top:167px;font-size:12px;line-height:14px;transform:scaleX(1.064);color:#969696">800m</span>
<span class="t" style="left:5.3px;top:194px;font-size:12px;line-height:14px;transform:scaleX(1.064);color:#969696">400m</span>
<span class="t" style="left:17.7px;top:220px;font-size:12px;line-height:14px;color:#969696">0</span>
<span class="t" style="left:3.2px;top:246px;font-size:12px;line-height:14px;transform:scaleX(1.055);color:#969696">-400m</span>
<span class="t" style="left:3.2px;top:272px;font-size:12px;line-height:14px;transform:scaleX(1.055);color:#969696">-800m</span>
<span class="t" style="left:10.5px;top:299px;font-size:12px;line-height:14px;transform:scaleX(1.019);color:#969696">-1.2</span>
<span class="t" style="left:10.5px;top:325px;font-size:12px;line-height:14px;transform:scaleX(1.017);color:#969696">-1.6</span>
<span class="t" style="left:2.4px;top:375px;font-size:21.2px;line-height:23px">Start: -5.628788</span>
<span class="t" style="left:633.8px;top:375px;font-size:21.2px;line-height:23px;transform:scaleX(0.993)">Stop: 5.628788</span>
</section>
<section class="panel" style="left:3px;top:539px;width:787px;height:444px">
<div class="hsep" style="left:4px;top:81px;width:777px"></div>
<span class="t" style="left:3.6px;top:9px;font-size:23px;line-height:26px;transform:scaleX(1.058)">FrameSummary</span>
<span class="t" style="left:7.9px;top:49px;font-size:21.2px;line-height:23px;transform:scaleX(0.980)">Channel</span>
<span class="t" style="left:162.2px;top:49px;font-size:21.2px;line-height:23px;transform:scaleX(0.944)">EVM(%rms)</span>
<span class="t" style="left:316.1px;top:49px;font-size:21.2px;line-height:23px;transform:scaleX(0.980)">Power(dB)</span>
<span class="t" style="left:470.2px;top:49px;font-size:21.2px;line-height:23px;transform:scaleX(1.011)">Mod.Fmt</span>
<span class="t" style="left:624.2px;top:49px;font-size:21.2px;line-height:23px;transform:scaleX(0.969)">Num.RB</span>
<span class="t" style="left:8.1px;top:91px;font-size:21.2px;line-height:23px;transform:scaleX(0.843);color:#ff00ff">P-SS</span>
<span class="t" style="left:162.0px;top:91px;font-size:21.2px;line-height:23px;color:#ff00ff">1.253</span>
<span class="t" style="left:316.0px;top:91px;font-size:21.2px;line-height:23px;transform:scaleX(1.004);color:#ff00ff">0.026</span>
<span class="t" style="left:470.1px;top:91px;font-size:21.2px;line-height:23px;transform:scaleX(0.940);color:#ff00ff">Z-Chu</span>
<span class="t" style="left:623.8px;top:91px;font-size:21.2px;line-height:23px;color:#ff00ff">7</span>
<span class="t" style="left:7.9px;top:120px;font-size:21.2px;line-height:23px;transform:scaleX(0.804);color:#0000ff">S-SS</span>
<span class="t" style="left:162.0px;top:120px;font-size:21.2px;line-height:23px;color:#0000ff">1.685</span>
<span class="t" style="left:316.0px;top:120px;font-size:21.2px;line-height:23px;transform:scaleX(0.939);color:#0000ff">0.031</span>
<span class="t" style="left:470.4px;top:120px;font-size:21.2px;line-height:23px;transform:scaleX(0.857);color:#0000ff">BPSK</span>
<span class="t" style="left:623.8px;top:120px;font-size:21.2px;line-height:23px;color:#0000ff">7</span>
<span class="t" style="left:8.0px;top:149px;font-size:21.2px;line-height:23px;transform:scaleX(0.915);color:#00ff00">PBCH</span>
<span class="t" style="left:162.0px;top:149px;font-size:21.2px;line-height:23px;transform:scaleX(1.004);color:#00ff00">0.976</span>
<span class="t" style="left:315.8px;top:149px;font-size:21.2px;line-height:23px;transform:scaleX(0.944);color:#00ff00">-0.021</span>
<span class="t" style="left:470.3px;top:149px;font-size:21.2px;line-height:23px;transform:scaleX(0.865);color:#00ff00">QPSK</span>
<span class="t" style="left:623.8px;top:149px;font-size:21.2px;line-height:23px;color:#00ff00">7</span>
<span class="t" style="left:8.0px;top:178px;font-size:21.2px;line-height:23px;transform:scaleX(0.894);color:#800080">PCFICH</span>
<span class="t" style="left:162.0px;top:178px;font-size:21.2px;line-height:23px;transform:scaleX(1.004);color:#800080">0.566</span>
<span class="t" style="left:315.7px;top:178px;font-size:21.2px;line-height:23px;color:#800080">-0.008</span>
<span class="t" style="left:470.4px;top:178px;font-size:21.2px;line-height:23px;transform:scaleX(0.857);color:#800080">BPSK</span>
<span class="t" style="left:624.1px;top:178px;font-size:21.2px;line-height:23px;transform:scaleX(1.007);color:#800080">12</span>
<span class="t" style="left:8.0px;top:207px;font-size:21.2px;line-height:23px;transform:scaleX(0.951);color:#ff0000">PHICH</span>
<span class="t" style="left:161.7px;top:207px;font-size:21.2px;line-height:23px;transform:scaleX(1.011);color:#ff0000">76.136</span>
<span class="t" style="left:315.7px;top:207px;font-size:21.2px;line-height:23px;color:#ff0000">-0.008</span>
<span class="t" style="left:470.4px;top:207px;font-size:21.2px;line-height:23px;transform:scaleX(0.857);color:#ff0000">BPSK</span>
<span class="t" style="left:624.0px;top:207px;font-size:21.2px;line-height:23px;color:#ff0000">9</span>
<span class="t" style="left:8.0px;top:236px;font-size:21.2px;line-height:23px;transform:scaleX(0.896);color:#ffff00">PDCCH</span>
<span class="t" style="left:162.0px;top:236px;font-size:21.2px;line-height:23px;color:#ffff00">0.535</span>
<span class="t" style="left:315.8px;top:236px;font-size:21.2px;line-height:23px;transform:scaleX(0.944);color:#ffff00">-7.131</span>
<span class="t" style="left:470.4px;top:236px;font-size:21.2px;line-height:23px;transform:scaleX(0.857);color:#ffff00">BPSK</span>
<span class="t" style="left:624.0px;top:236px;font-size:21.2px;line-height:23px;transform:scaleX(1.011);color:#ffff00">39</span>
<span class="t" style="left:8.3px;top:265px;font-size:21.2px;line-height:23px;transform:scaleX(0.774);color:#00ffff">RS</span>
<span class="t" style="left:162.0px;top:265px;font-size:21.2px;line-height:23px;transform:scaleX(1.009);color:#00ffff">0.444</span>
<span class="t" style="left:315.7px;top:265px;font-size:21.2px;line-height:23px;color:#00ffff">-0.000</span>
<span class="t" style="left:470.3px;top:265px;font-size:21.2px;line-height:23px;transform:scaleX(0.865);color:#00ffff">QPSK</span>
<span class="t" style="left:624.0px;top:265px;font-size:21.2px;line-height:23px;transform:scaleX(1.005);color:#00ffff">90</span>
<span class="t" style="left:8.0px;top:294px;font-size:21.2px;line-height:23px;transform:scaleX(0.898);color:#a52a2a">PDSCH0</span>
<span class="t" style="left:162.1px;top:294px;font-size:21.2px;line-height:23px;transform:scaleX(0.938);color:#a52a2a">1.251</span>
<span class="t" style="left:316.0px;top:294px;font-size:21.2px;line-height:23px;transform:scaleX(1.004);color:#a52a2a">0.002</span>
<span class="t" style="left:470.3px;top:294px;font-size:21.2px;line-height:23px;transform:scaleX(0.865);color:#a52a2a">QPSK</span>
<span class="t" style="left:624.1px;top:294px;font-size:21.2px;line-height:23px;color:#a52a2a">0</span>
<span class="t" style="left:8.1px;top:323px;font-size:21.2px;line-height:23px;transform:scaleX(0.879);color:#a52a2a">PDSCH1</span>
<span class="t" style="left:161.8px;top:323px;font-size:21.2px;line-height:23px;transform:scaleX(0.941);color:#a52a2a">---</span>
<span class="t" style="left:315.8px;top:323px;font-size:21.2px;line-height:23px;transform:scaleX(0.941);color:#a52a2a">---</span>
<span class="t" style="left:469.9px;top:323px;font-size:21.2px;line-height:23px;transform:scaleX(0.941);color:#a52a2a">---</span>
<span class="t" style="left:624.1px;top:323px;font-size:21.2px;line-height:23px;color:#a52a2a">0</span>
</section>
<section class="panel" style="left:795px;top:539px;width:787px;height:444px">
<div class="hsep" style="left:4px;top:81px;width:777px"></div>
<div class="hsep" style="left:4px;top:413px;width:777px"></div>
<div class="abs" style="left:767px;top:97px;width:6px;height:187px;background:#2a2a2a"></div>
<span class="t" style="left:3.3px;top:9px;font-size:23px;line-height:26px;transform:scaleX(1.080)">ErrorSummary</span>
<span class="t" style="left:8.5px;top:49px;font-size:21.2px;line-height:23px;transform:scaleX(0.991)">Name</span>
<span class="t" style="left:265.2px;top:49px;font-size:21.2px;line-height:23px;transform:scaleX(0.923)">Value</span>
<span class="t" style="left:521.4px;top:49px;font-size:21.2px;line-height:23px;transform:scaleX(1.055)">Unit</span>
<span class="t" style="left:8.7px;top:91px;font-size:21.2px;line-height:23px;transform:scaleX(0.878)">EVM</span>
<span class="t" style="left:265.5px;top:91px;font-size:21.2px;line-height:23px;transform:scaleX(0.938)">1.131</span>
<span class="t" style="left:521.6px;top:91px;font-size:21.2px;line-height:23px;transform:scaleX(0.985)">%rms</span>
<span class="t" style="left:8.7px;top:120px;font-size:21.2px;line-height:23px;transform:scaleX(0.873)">EVM PK</span>
<span class="t" style="left:265.1px;top:120px;font-size:21.2px;line-height:23px;transform:scaleX(1.017)">7040045568.000</span>
<span class="t" style="left:521.6px;top:120px;font-size:21.2px;line-height:23px">%</span>
<span class="t" style="left:8.6px;top:149px;font-size:21.2px;line-height:23px;transform:scaleX(0.922)">Data EVM</span>
<span class="t" style="left:265.5px;top:149px;font-size:21.2px;line-height:23px;transform:scaleX(0.938)">1.251</span>
<span class="t" style="left:521.6px;top:149px;font-size:21.2px;line-height:23px;transform:scaleX(0.985)">%rms</span>
<span class="t" style="left:8.4px;top:178px;font-size:21.2px;line-height:23px;transform:scaleX(0.882)"> - 3GPP QPSK EVM</span>
<span class="t" style="left:265.5px;top:178px;font-size:21.2px;line-height:23px;transform:scaleX(0.938)">1.251</span>
<span class="t" style="left:521.6px;top:178px;font-size:21.2px;line-height:23px;transform:scaleX(0.985)">%rms</span>
<span class="t" style="left:8.1px;top:207px;font-size:21.2px;line-height:23px;transform:scaleX(0.926)"> - 3GPP 16QAM EVM</span>
<span class="t" style="left:265.4px;top:207px;font-size:21.2px;line-height:23px">0.000</span>
<span class="t" style="left:521.6px;top:207px;font-size:21.2px;line-height:23px;transform:scaleX(0.985)">%rms</span>
<span class="t" style="left:8.1px;top:236px;font-size:21.2px;line-height:23px;transform:scaleX(0.926)"> - 3GPP 64QAM EVM</span>
<span class="t" style="left:265.4px;top:236px;font-size:21.2px;line-height:23px">0.000</span>
<span class="t" style="left:521.6px;top:236px;font-size:21.2px;line-height:23px;transform:scaleX(0.985)">%rms</span>
<span class="t" style="left:8.7px;top:265px;font-size:21.2px;line-height:23px;transform:scaleX(0.847)">RS EVM</span>
<span class="t" style="left:265.2px;top:265px;font-size:21.2px;line-height:23px;transform:scaleX(0.941)">---</span>
<span class="t" style="left:521.6px;top:265px;font-size:21.2px;line-height:23px;transform:scaleX(0.985)">%rms</span>
<span class="t" style="left:8.6px;top:294px;font-size:21.2px;line-height:23px;transform:scaleX(0.917)">RS Tx Power(Avg)</span>
<span class="t" style="left:265.1px;top:294px;font-size:21.2px;line-height:23px">-13.275</span>
<span class="t" style="left:521.6px;top:294px;font-size:21.2px;line-height:23px;transform:scaleX(0.962)">dBfs</span>
<span class="t" style="left:8.5px;top:323px;font-size:21.2px;line-height:23px;transform:scaleX(0.943)">OFDM Sym Tx. Power</span>
<span class="t" style="left:265.3px;top:323px;font-size:21.2px;line-height:23px;transform:scaleX(1.006)">3.596</span>
<span class="t" style="left:521.6px;top:323px;font-size:21.2px;line-height:23px;transform:scaleX(0.962)">dBfs</span>
<span class="t" style="left:8.5px;top:352px;font-size:21.2px;line-height:23px;transform:scaleX(0.966)">Channel Power</span>
<span class="t" style="left:265.3px;top:352px;font-size:21.2px;line-height:23px">6.015</span>
<span class="t" style="left:521.6px;top:352px;font-size:21.2px;line-height:23px;transform:scaleX(0.962)">dBfs</span>
<span class="t" style="left:8.6px;top:381px;font-size:21.2px;line-height:23px;transform:scaleX(0.915)">RS Rx Quality</span>
<span class="t" style="left:265.4px;top:381px;font-size:21.2px;line-height:23px">0.000</span>
<span class="t" style="left:521.7px;top:381px;font-size:21.2px;line-height:23px;transform:scaleX(0.953)">dB</span>
<div class="abs" style="left:0;top:415px;width:780px;height:19px;overflow:hidden">
<span class="t" style="left:8.5px;top:8px;font-size:21.2px;line-height:23px;transform:scaleX(0.976)">Freq Error</span>
<span class="t" style="left:265.4px;top:8px;font-size:21.2px;line-height:23px;transform:scaleX(1.006)">101.765</span>
<span class="t" style="left:521.7px;top:8px;font-size:21.2px;line-height:23px;transform:scaleX(0.922)">Hz</span>
</div>
</section>
<footer style="left:0;top:986px;width:1585px;height:94px">
<div class="hsep" style="left:0;top:0;width:1585px"></div>
<button type="button" style="left:9px;top:4px;width:86px;height:86px"><svg width="86" height="86" viewBox="9 990 86 86"><g fill="none" stroke="#ececec" stroke-width="1.45" stroke-linecap="round" stroke-linejoin="round"><path d="M32 1020V1016.8a3.7 3.7 0 0 1 3.7-3.7H39M65 1013.1H68.3a3.7 3.7 0 0 1 3.7 3.7V1020M72 1046V1049.2a3.7 3.7 0 0 1-3.7 3.7H65M39 1052.9H35.7a3.7 3.7 0 0 1-3.7-3.7V1046"/><rect x="38.8" y="1020" width="26.6" height="26.2" rx="2.2"/><path d="M38.8 1036.6L45.3 1031.9L47.9 1034.5L50.5 1032.9L54.7 1037.6L57.1 1035.7L65 1040.2" stroke-width="1.4"/><circle cx="56.2" cy="1028.5" r="1.3" fill="#e6e6e6" stroke="none"/><path d="M56.2 1024.9v1.2M56.2 1030.9v1.2M52.6 1028.5h1.2M58.6 1028.5h1.2M53.7 1026l.8.8M57.9 1030.2l.8.8M58.7 1026l-.8.8M54.5 1030.2l-.8.8" stroke-width="0.9"/></g></svg></button>
<button type="button" style="left:103px;top:4px;width:86px;height:86px"><svg width="86" height="86" viewBox="103 990 86 86"><g fill="none" stroke="#ececec" stroke-width="1.45" stroke-linecap="round" stroke-linejoin="round"><path d="M125.6 1018.6a3.2 3.2 0 0 1 3.2-3.2H142a2.4 2.4 0 0 1 2.4 2.4V1020.4H163.3a3.2 3.2 0 0 1 3.2 3.2V1047.4a3.2 3.2 0 0 1-3.2 3.2H128.8a3.2 3.2 0 0 1-3.2-3.2Z"/><path d="M125.6 1026.7H166.5"/></g></svg></button>
<button type="button" style="left:197px;top:4px;width:86px;height:86px"><svg width="86" height="86" viewBox="197 990 86 86"><g fill="none" stroke="#ececec" stroke-width="1.45" stroke-linecap="round" stroke-linejoin="round"><path d="M237.2 1011.7L242.8 1011.7L243.5 1016.6L249.0 1018.9L252.9 1015.9L256.9 1019.9L253.9 1023.8L256.2 1029.3L261.1 1030.0L261.1 1035.6L256.2 1036.3L253.9 1041.8L256.9 1045.7L252.9 1049.7L249.0 1046.7L243.5 1049.0L242.8 1053.9L237.2 1053.9L236.5 1049.0L231.0 1046.7L227.1 1049.7L223.1 1045.7L226.1 1041.8L223.8 1036.3L218.9 1035.6L218.9 1030.0L223.8 1029.3L226.1 1023.8L223.1 1019.9L227.1 1015.9L231.0 1018.9L236.5 1016.6Z" stroke-linejoin="round"/><circle cx="240" cy="1032.8" r="9.2"/></g></svg></button>
<button type="button" style="left:291px;top:4px;width:86px;height:86px"><svg width="86" height="86" viewBox="291 990 86 86"><g fill="none" stroke="#ececec" stroke-width="1.45" stroke-linecap="round" stroke-linejoin="round"><circle cx="333.8" cy="1033" r="20.7"/><path d="M328 1027.3a6 6 0 1 1 9.2 5.1c-2.4 1.6-3.3 2.9-3.3 6.1" /><circle cx="333.9" cy="1043.2" r="1.1" fill="#e6e6e6" stroke="none"/></g></svg></button>
<button type="button" style="left:385px;top:4px;width:86px;height:86px"><svg width="86" height="86" viewBox="385 990 86 86"><g fill="none" stroke="#ececec" stroke-width="1.45" stroke-linecap="round" stroke-linejoin="round" stroke-width="1.4"><path d="M423.5 1015H432.6V1033.7H437.5L428 1044L418.5 1033.7H423.5Z"/><path d="M421 1038.7H411.4a2 2 0 0 0-2 2V1049.5a2 2 0 0 0 2 2H444.5a2 2 0 0 0 2-2V1040.7a2 2 0 0 0-2-2H435"/></g></svg></button>
<svg style="left:517px;top:31px" width="16" height="33" viewBox="517 1017 16 33"><g fill="#66ee11"><rect x="521.3" y="1018" width="7.6" height="7.2" rx="1.6"/><path d="M518.6 1029.2h9.8a1 1 0 0 1 1 1v13.6h2.2a.8.8 0 0 1 .8.8v3.6a.8.8 0 0 1-.8.8h-13a.8.8 0 0 1-.8-.8v-3.6a.8.8 0 0 1 .8-.8h2.8v-9.4h-2.8a.8.8 0 0 1-.8-.8v-3.6a.8.8 0 0 1 .8-.8z"/></g></svg>
<div class="vsep" style="left:1233px;top:4px;height:86px"></div><div class="vsep" style="left:1357px;top:4px;height:86px"></div><div class="vsep" style="left:1481px;top:4px;height:86px"></div>
<svg style="left:1266px;top:37px" width="60" height="20" viewBox="1266 1023 60 20"><g fill="none" stroke="#dedede" stroke-width="1"><rect x="1267.6" y="1025.4" width="7.8" height="4.7" rx=".6"/><path d="M1267.6 1030.1v2.2h3.2"/><rect x="1272.2" y="1031.4" width="10.3" height="8" rx="1.1" fill="#000"/><path d="M1272.2 1037.9h10.3"/><path d="M1274.2 1040.7h6" stroke-width="1.2"/></g><g fill="none" stroke="#b4b4b4"><rect x="1289.9" y="1026.7" width="8.3" height="4.8" stroke-width="1.3"/><path d="M1288 1040V1034.4a1.7 1.7 0 0 1 1.7-1.7H1298.3a1.7 1.7 0 0 1 1.7 1.7V1040" stroke-width="1.5" stroke="#c4c4c4"/></g><rect x="1292.1" y="1027.9" width="1" height="1.6" fill="#8a8a8a"/><rect x="1295" y="1027.9" width="1" height="1.6" fill="#8a8a8a"/><path d="M1314 1025.4L1322.6 1040.4H1305.4Z" fill="#f44336" stroke="#f44336" stroke-width="1.2" stroke-linejoin="round"/><path d="M1312.9 1030.8h2.2l-.35 4.8h-1.5z" fill="#000"/><circle cx="1314" cy="1037.9" r="1.15" fill="#000"/></svg>
<button type="button" style="left:1490px;top:4px;width:86px;height:86px"><svg width="86" height="86" viewBox="1490 990 86 86"><g fill="none" stroke="#e6e6e6" stroke-width="1.3" stroke-linejoin="miter"><path transform="translate(1527.5 1027.5) rotate(-135)" d="M0 -2.3H9.7V-5.3L17.1 0L9.7 5.3V2.3H0Z"/><path transform="translate(1538.5 1027.5) rotate(-45)" d="M0 -2.3H9.7V-5.3L17.1 0L9.7 5.3V2.3H0Z"/><path transform="translate(1527.5 1038.5) rotate(135)" d="M0 -2.3H9.7V-5.3L17.1 0L9.7 5.3V2.3H0Z"/><path transform="translate(1538.5 1038.5) rotate(45)" d="M0 -2.3H9.7V-5.3L17.1 0L9.7 5.3V2.3H0Z"/></g></svg></button>
<span class="t" style="left:559.6px;top:32px;font-size:26.8px;line-height:30px;transform:scaleX(1.010)">USB flash disk insertion</span>
<span class="t" style="left:1389.9px;top:20px;font-size:23px;line-height:26px;transform:scaleX(1.008)">20:18</span>
<span class="t" style="left:1359.7px;top:48px;font-size:23px;line-height:26px;transform:scaleX(1.006)">2025-08-15</span>
</footer>
<aside>
<nav class="item" style="left:7px;top:0;width:321px;height:86px;border:1px solid #2e3137"></nav>
<div class="item" style="top:91px;height:93px"></div>
<div class="abs" style="left:8px;top:140px;width:159px;height:40px;background:#1e88e5"></div>
<div class="item" style="top:189px"></div>
<div class="item" style="top:274px"></div>
<div class="item" style="top:359px"></div>
<div class="item" style="top:444px"></div>
<div class="item" style="top:529px"></div>
<div class="item" style="top:614px"></div>
<div class="item" style="top:699px"></div>
<svg style="left:24.1px;top:31.8px" width="13.2" height="23.3" viewBox="24.1 31.8 13.2 23.3"><path d="M34.4 34.7L27.0 43.5L34.4 52.2" fill="none" stroke="#1296db" stroke-width="3.8" stroke-linecap="round" stroke-linejoin="round"/></svg>
<svg style="left:12.6px;top:303.8px" width="11.9" height="19.4" viewBox="12.6 303.8 11.9 19.4"><path d="M21.9 306.4L15.2 313.5L21.9 320.6" fill="none" stroke="#dcdcdc" stroke-width="3.2" stroke-linecap="round" stroke-linejoin="round"/></svg>
<svg style="left:12.6px;top:388.8px" width="11.9" height="19.4" viewBox="12.6 388.8 11.9 19.4"><path d="M21.9 391.4L15.2 398.5L21.9 405.6" fill="none" stroke="#dcdcdc" stroke-width="3.2" stroke-linecap="round" stroke-linejoin="round"/></svg>
<svg style="left:12.6px;top:473.8px" width="11.9" height="19.4" viewBox="12.6 473.8 11.9 19.4"><path d="M21.9 476.4L15.2 483.5L21.9 490.6" fill="none" stroke="#dcdcdc" stroke-width="3.2" stroke-linecap="round" stroke-linejoin="round"/></svg>
<svg style="left:12.6px;top:558.8px" width="11.9" height="19.4" viewBox="12.6 558.8 11.9 19.4"><path d="M21.9 561.4L15.2 568.5L21.9 575.6" fill="none" stroke="#dcdcdc" stroke-width="3.2" stroke-linecap="round" stroke-linejoin="round"/></svg>
<svg style="left:12.6px;top:643.8px" width="11.9" height="19.4" viewBox="12.6 643.8 11.9 19.4"><path d="M21.9 646.4L15.2 653.5L21.9 660.6" fill="none" stroke="#dcdcdc" stroke-width="3.2" stroke-linecap="round" stroke-linejoin="round"/></svg>
<svg style="left:299.6px;top:222.2px" width="22.9" height="13.0" viewBox="299.6 222.2 22.9 13.0"><path d="M302.4 225.0L311.0 232.4L319.6 225.0" fill="none" stroke="#1296db" stroke-width="3.6" stroke-linecap="round" stroke-linejoin="round"/></svg>
<svg style="left:299.6px;top:732.2px" width="22.9" height="13.0" viewBox="299.6 732.2 22.9 13.0"><path d="M302.4 735.0L311.0 742.4L319.6 735.0" fill="none" stroke="#1296db" stroke-width="3.6" stroke-linecap="round" stroke-linejoin="round"/></svg>
<span class="t" style="left:94.7px;top:28px;font-size:26.8px;line-height:30px;transform:scaleX(1.011)">Meas/Setup</span>
<span class="t" style="left:111.9px;top:105px;font-size:26.8px;line-height:30px;transform:scaleX(1.046)">Direction</span>
<span class="t" style="left:36.1px;top:147px;font-size:23px;line-height:26px;transform:scaleX(1.080);color:#ffffff">Downlink</span>
<span class="t" style="left:211.1px;top:147px;font-size:23px;line-height:26px;transform:scaleX(1.076)">Uplink</span>
<span class="t" style="left:101.6px;top:197px;font-size:26.8px;line-height:30px;transform:scaleX(1.049)">Bandwidth</span>
<span class="t" style="left:96.6px;top:231px;font-size:26.8px;line-height:30px;transform:scaleX(0.984)">3MHz/15RB</span>
<span class="t" style="left:90.6px;top:299px;font-size:26.8px;line-height:30px;transform:scaleX(1.006)">Sync/Format</span>
<span class="t" style="left:101.3px;top:384px;font-size:26.8px;line-height:30px;transform:scaleX(0.992)">Meas Time</span>
<span class="t" style="left:103.2px;top:469px;font-size:26.8px;line-height:30px">DL Format</span>
<span class="t" style="left:93.1px;top:554px;font-size:26.8px;line-height:30px;transform:scaleX(1.007)">Chan Profile</span>
<span class="t" style="left:108.8px;top:639px;font-size:26.8px;line-height:30px">Advanced</span>
<span class="t" style="left:69.8px;top:724px;font-size:26.8px;line-height:30px;transform:scaleX(1.006)">Preset Standard</span>
</aside>
</main></body></html>
